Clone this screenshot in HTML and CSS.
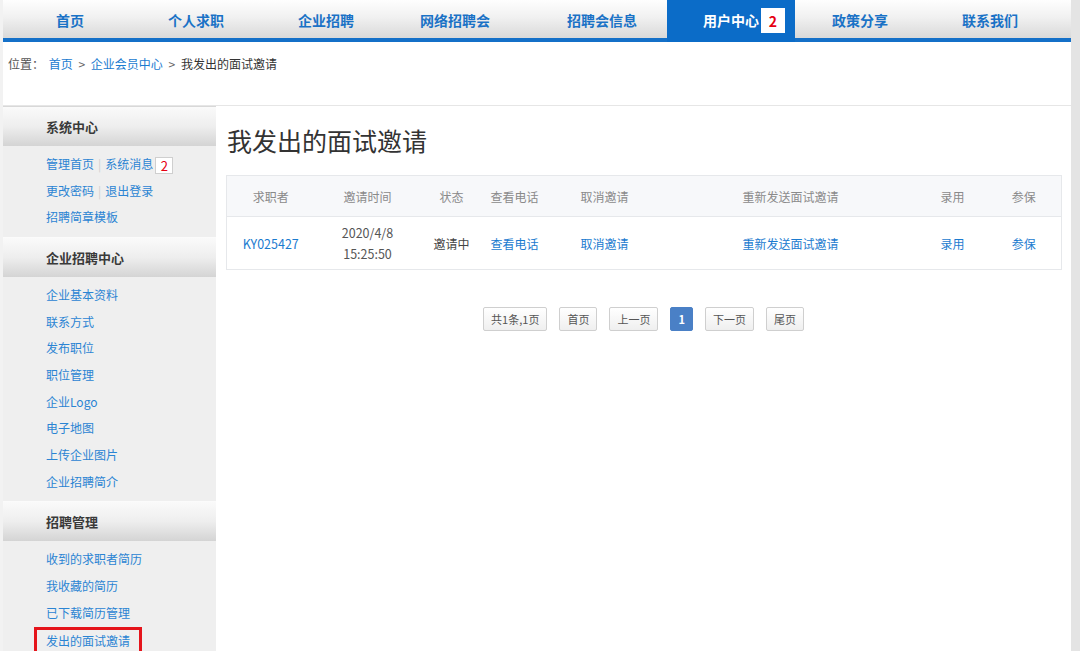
FILE: index.html
```html
<!DOCTYPE html>
<html lang="zh-CN">
<head>
<meta charset="utf-8">
<title>我发出的面试邀请</title>
<link rel="stylesheet" href="styles.css">
</head>
<body>
<div class="page">
  <nav class="nav">
    <a class="nav-item">首页</a>
    <a class="nav-item">个人求职</a>
    <a class="nav-item">企业招聘</a>
    <a class="nav-item nav-item-wide">网络招聘会</a>
    <a class="nav-item">招聘会信息</a>
    <a class="nav-item active">用户中心<span class="nav-badge">2</span></a>
    <a class="nav-item">政策分享</a>
    <a class="nav-item">联系我们</a>
  </nav>

  <div class="crumb">
    <span class="crumb-label">位置：</span>
    <a class="crumb-link">首页</a>
    <span class="crumb-sep">&gt;</span>
    <a class="crumb-link">企业会员中心</a>
    <span class="crumb-sep">&gt;</span>
    <span class="crumb-cur">我发出的面试邀请</span>
  </div>

  <div class="main-wrap">
    <aside class="side">
      <div class="side-head">系统中心</div>
      <ul class="side-list">
        <li><a>管理首页</a><span class="pipe">|</span><a>系统消息</a><span class="msg-badge">2</span></li>
        <li><a>更改密码</a><span class="pipe">|</span><a>退出登录</a></li>
        <li><a>招聘简章模板</a></li>
      </ul>
      <div class="side-head">企业招聘中心</div>
      <ul class="side-list">
        <li><a>企业基本资料</a></li>
        <li><a>联系方式</a></li>
        <li><a>发布职位</a></li>
        <li><a>职位管理</a></li>
        <li><a>企业Logo</a></li>
        <li><a>电子地图</a></li>
        <li><a>上传企业图片</a></li>
        <li><a>企业招聘简介</a></li>
      </ul>
      <div class="side-head">招聘管理</div>
      <ul class="side-list">
        <li><a>收到的求职者简历</a></li>
        <li><a>我收藏的简历</a></li>
        <li><a>已下载简历管理</a></li>
        <li><a class="current">发出的面试邀请</a></li>
      </ul>
    </aside>

    <main class="content">
      <h1 class="title">我发出的面试邀请</h1>
      <table class="grid">
        <colgroup>
          <col class="c1"><col class="c2"><col class="c3"><col class="c4">
          <col class="c5"><col class="c6"><col class="c7"><col class="c8">
        </colgroup>
        <thead>
          <tr>
            <th>求职者</th><th>邀请时间</th><th>状态</th><th>查看电话</th>
            <th>取消邀请</th><th>重新发送面试邀请</th><th>录用</th><th>参保</th>
          </tr>
        </thead>
        <tbody>
          <tr>
            <td><a class="lnk">KY025427</a></td>
            <td class="date">2020/4/8<br>15:25:50</td>
            <td class="status">邀请中</td>
            <td><a class="lnk">查看电话</a></td>
            <td><a class="lnk">取消邀请</a></td>
            <td><a class="lnk">重新发送面试邀请</a></td>
            <td><a class="lnk">录用</a></td>
            <td><a class="lnk">参保</a></td>
          </tr>
        </tbody>
      </table>

      <div class="pager">
        <span class="pg">共1条,1页</span>
        <a class="pg">首页</a>
        <a class="pg">上一页</a>
        <span class="pg pg-on">1</span>
        <a class="pg">下一页</a>
        <a class="pg">尾页</a>
      </div>
    </main>
  </div>
</div>
</body>
</html>
```

FILE: styles.css
```css
* { box-sizing: border-box; }

html, body {
  margin: 0;
  padding: 0;
  height: 100%;
}

body {
  background: #e4e4e4;
  font-family: "Noto Sans CJK SC", "Microsoft YaHei", sans-serif;
  font-size: 12px;
  color: #333;
  overflow: hidden;
}

a { text-decoration: none; cursor: pointer; }

.page {
  width: 1071px;
  min-height: 100%;
  background: #fff;
  border-left: 3px solid #f2f2f2;
  border-bottom: 2px solid #cfcfcf;
}

/* ---------- top navigation ---------- */
.nav {
  display: grid;
  grid-template-columns: 134px 118px 142px 140px 130px 128px 130px 130px 1fr;
  height: 42px;
  background: linear-gradient(#fefefe 0%, #f1f1f1 45%, #d9d9d9 100%);
  border-bottom: 4px solid #1470c8;
}

.nav-item {
  position: relative;
  display: flex;
  align-items: center;
  justify-content: center;
  font-size: 14px;
  font-weight: 700;
  color: #1a72c6;
  padding-top: 2px;
}

.nav-item-wide { padding-right: 24px; }

.nav-item.active {
  background: #0b6cc8;
  color: #fff;
  margin-bottom: -4px;
  padding-bottom: 4px;
}

.nav-badge {
  position: absolute;
  left: 94px;
  top: 8px;
  width: 24px;
  height: 25px;
  background: #fff;
  color: #e60012;
  font-size: 14px;
  font-weight: 700;
  display: flex;
  align-items: center;
  justify-content: center;
}

/* ---------- breadcrumb ---------- */
.crumb {
  height: 64px;
  padding: 13px 0 0 5px;
  line-height: 18px;
  font-size: 12px;
  border-bottom: 1px solid #e6e6e6;
}

.crumb-label { color: #555; margin-right: 2px; }
.crumb-link { color: #1a7bd0; }
.crumb-sep { color: #666; margin: 0 3px; }
.crumb-cur { color: #333; }

/* ---------- body ---------- */
.main-wrap {
  display: flex;
  min-height: 560px;
}

.side {
  width: 213px;
  flex: none;
  background: #efefef;
}

.side-head {
  height: 40px;
  line-height: 40px;
  padding-left: 43px;
  border-top: 1px solid #fbfbfb;
  background: linear-gradient(#fafafa 0%, #eeeeee 50%, #d4d4d4 100%);
  font-size: 13px;
  font-weight: 700;
  color: #3a3a3a;
}

.side-head:first-child { border-top-color: #d8d8d8; }

.side-list {
  list-style: none;
  margin: 0;
  padding: 5px 0 6px 43px;
}

.side-list li {
  height: 26.67px;
  line-height: 26.67px;
  font-size: 12px;
  white-space: nowrap;
}

.side-list a { color: #2b84d3; }

.pipe {
  color: #cfcfcf;
  margin: 0 4px;
}

.msg-badge {
  display: inline-block;
  width: 18px;
  height: 17px;
  line-height: 15px;
  margin-left: 2px;
  border: 1px solid #cfcfcf;
  background: #fff;
  color: #e60012;
  font-size: 13px;
  text-align: center;
  vertical-align: middle;
}

.side-list a.current {
  display: inline-block;
  margin-left: -12px;
  padding: 0 9px;
  height: 26px;
  line-height: 22px;
  border: 3px solid #e5141b;
  border-bottom: none;
  margin-top: 1px;
}

/* ---------- content ---------- */
.content {
  flex: 1;
  padding: 17px 10px 0 10px;
}

.title {
  margin: 0;
  font-size: 25px;
  line-height: 34px;
  font-weight: 400;
  color: #333;
  padding-left: 1px;
}

.grid {
  margin-top: 18px;
  width: 835px;
  border-collapse: collapse;
  table-layout: fixed;
  border: 1px solid #e6e8eb;
}

.c1 { width: 88px; }
.c2 { width: 106px; }
.c3 { width: 62px; }
.c4 { width: 64px; }
.c5 { width: 116px; }
.c6 { width: 256px; }
.c7 { width: 68px; }
.c8 { width: 75px; }

.grid th {
  height: 41px;
  background: #f7f8fa;
  color: #8a8a8a;
  font-weight: 400;
  font-size: 12px;
  text-align: center;
  border-bottom: 1px solid #e6e8eb;
}

.grid td {
  height: 53px;
  text-align: center;
  font-size: 12px;
  color: #444;
}

.grid td.date {
  line-height: 21px;
  color: #555;
  font-size: 12.5px;
}

.lnk { color: #1b7bcf; }
.grid td:first-child .lnk { font-size: 12.5px; }

/* ---------- pager ---------- */
.pager {
  display: flex;
  justify-content: center;
  gap: 12px;
  margin-top: 37px;
  width: 835px;
}

.pg {
  height: 24px;
  line-height: 22px;
  padding: 0 7px;
  border: 1px solid #cfcfcf;
  border-radius: 2px;
  background: linear-gradient(#ffffff, #efefef);
  color: #555;
  font-size: 11px;
}

.pg-on {
  background: #4a80c6;
  border-color: #4a80c6;
  color: #fff;
  font-weight: 700;
}
```
